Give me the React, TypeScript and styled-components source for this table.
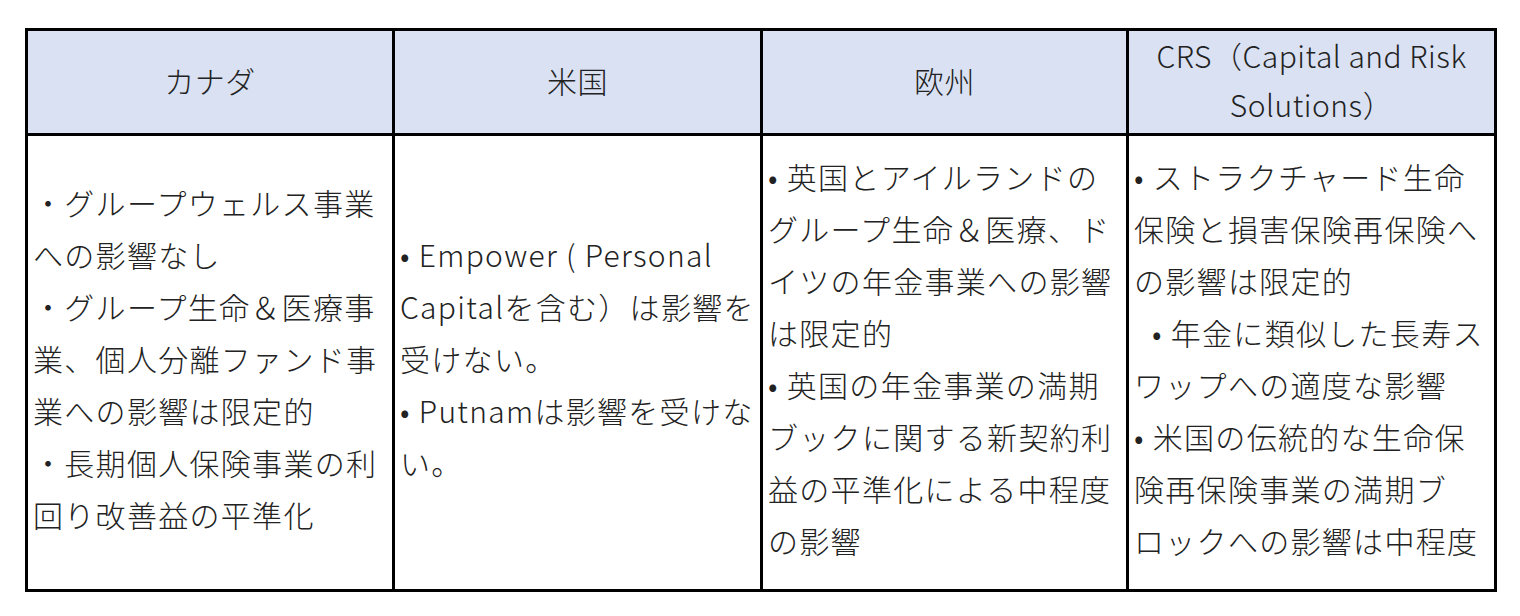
import styled, { createGlobalStyle } from "styled-components";

const GlobalStyle = createGlobalStyle`
  html, body {
    margin: 0;
    padding: 0;
    background: #ffffff;
  }
  body {
    font-family: "Noto Sans CJK JP", "Noto Sans", sans-serif;
    color: #1c1c1c;
  }
`;

type Line = { text: string; indent?: boolean };

const headers: string[][] = [
  ["カナダ"],
  ["米国"],
  ["欧州"],
  ["CRS（Capital and Risk", "Solutions）"],
];

const columns: Line[][] = [
  [
    { text: "・グループウェルス事業" },
    { text: "への影響なし" },
    { text: "・グループ生命＆医療事" },
    { text: "業、個人分離ファンド事" },
    { text: "業への影響は限定的" },
    { text: "・長期個人保険事業の利" },
    { text: "回り改善益の平準化" },
  ],
  [
    { text: "• Empower ( Personal" },
    { text: "Capitalを含む）は影響を" },
    { text: "受けない。" },
    { text: "• Putnamは影響を受けな" },
    { text: "い。" },
  ],
  [
    { text: "• 英国とアイルランドの" },
    { text: "グループ生命＆医療、ド" },
    { text: "イツの年金事業への影響" },
    { text: "は限定的" },
    { text: "• 英国の年金事業の満期" },
    { text: "ブックに関する新契約利" },
    { text: "益の平準化による中程度" },
    { text: "の影響" },
  ],
  [
    { text: "• ストラクチャード生命" },
    { text: "保険と損害保険再保険へ" },
    { text: "の影響は限定的" },
    { text: "• 年金に類似した長寿ス", indent: true },
    { text: "ワップへの適度な影響" },
    { text: "• 米国の伝統的な生命保" },
    { text: "険再保険事業の満期ブ" },
    { text: "ロックへの影響は中程度" },
  ],
];

const colWidths = [367, 368, 366, 368];

export default function App() {
  return (
    <>
      <GlobalStyle />
      <Page>
        <Table>
          <colgroup>
            {colWidths.map((w, i) => (
              <col key={i} style={{ width: w }} />
            ))}
          </colgroup>
          <thead>
            <tr>
              {headers.map((lines, i) => (
                <HeadCell key={i}>
                  {lines.map((l, j) => (
                    <HeadLine key={j}>{l}</HeadLine>
                  ))}
                </HeadCell>
              ))}
            </tr>
          </thead>
          <tbody>
            <tr>
              {columns.map((lines, i) => (
                <BodyCell key={i}>
                  {lines.map((l, j) => (
                    <TextLine key={j} $indent={l.indent}>
                      {l.text}
                    </TextLine>
                  ))}
                </BodyCell>
              ))}
            </tr>
          </tbody>
        </Table>
      </Page>
    </>
  );
}

const Page = styled.div`
  padding: 28px 0 0 25px;
`;

const Table = styled.table`
  table-layout: fixed;
  width: 1472px;
  border-collapse: separate;
  border-spacing: 0;
  border-top: 3px solid #000;
  border-left: 3px solid #000;
`;

const HeadCell = styled.th`
  box-sizing: border-box;
  height: 105px;
  padding: 0 5px 4px;
  background: #d9e1f2;
  border-right: 3px solid #000;
  border-bottom: 3px solid #000;
  font-weight: 300;
  font-size: 30px;
  letter-spacing: 0.5px;
  text-align: center;
  vertical-align: middle;
  color: #222;
`;

const HeadLine = styled.div`
  line-height: 49px;
  white-space: nowrap;
`;

const BodyCell = styled.td`
  box-sizing: border-box;
  height: 456px;
  padding: 0 5px 9px;
  border-right: 3px solid #000;
  border-bottom: 3px solid #000;
  vertical-align: middle;
  text-align: left;
  font-weight: 300;
  font-size: 30px;
  letter-spacing: 1.3px;
  color: #222;
`;

const TextLine = styled.div<{ $indent?: boolean }>`
  line-height: 52px;
  white-space: nowrap;
  padding-left: ${(p) => (p.$indent ? "18px" : "0")};
`;
